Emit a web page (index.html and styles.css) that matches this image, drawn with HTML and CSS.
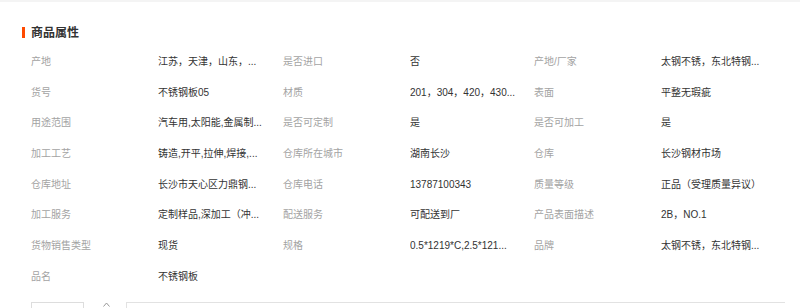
FILE: index.html
```html
<!DOCTYPE html>
<html lang="zh-CN">
<head>
<meta charset="utf-8">
<title>商品属性</title>
<link rel="stylesheet" href="styles.css">
</head>
<body>
<div class="top-band"></div>
<section class="attrs">
  <h2 class="title"><span class="bar"></span>商品属性</h2>
  <div class="grid">
    <div class="label">产地</div><div class="value">江苏，天津，山东，...</div>
    <div class="label">是否进口</div><div class="value">否</div>
    <div class="label">产地/厂家</div><div class="value">太钢不锈，东北特钢...</div>

    <div class="label">货号</div><div class="value">不锈钢板05</div>
    <div class="label">材质</div><div class="value">201，304，420，430...</div>
    <div class="label">表面</div><div class="value">平整无瑕疵</div>

    <div class="label">用途范围</div><div class="value">汽车用,太阳能,金属制...</div>
    <div class="label">是否可定制</div><div class="value">是</div>
    <div class="label">是否可加工</div><div class="value">是</div>

    <div class="label">加工工艺</div><div class="value">铸造,开平,拉伸,焊接,...</div>
    <div class="label">仓库所在城市</div><div class="value">湖南长沙</div>
    <div class="label">仓库</div><div class="value">长沙钢材市场</div>

    <div class="label">仓库地址</div><div class="value">长沙市天心区力鼎钢...</div>
    <div class="label">仓库电话</div><div class="value">13787100343</div>
    <div class="label">质量等级</div><div class="value">正品（受理质量异议）</div>

    <div class="label">加工服务</div><div class="value">定制样品,深加工（冲...</div>
    <div class="label">配送服务</div><div class="value">可配送到厂</div>
    <div class="label">产品表面描述</div><div class="value">2B，NO.1</div>

    <div class="label">货物销售类型</div><div class="value">现货</div>
    <div class="label">规格</div><div class="value">0.5*1219*C,2.5*121...</div>
    <div class="label">品牌</div><div class="value">太钢不锈，东北特钢...</div>

    <div class="label">品名</div><div class="value">不锈钢板</div>
  </div>
  <div class="bottom">
    <div class="box-small"></div>
    <svg class="caret" width="7" height="5" viewBox="0 0 7 5"><polyline points="0.5,4.5 3.5,1 6.5,4.5" fill="none" stroke="#999" stroke-width="1"/></svg>
    <div class="box-wide"></div>
  </div>
</section>
</body>
</html>
```

FILE: styles.css
```css
html, body {
  margin: 0;
  padding: 0;
  background: #ffffff;
  overflow: hidden;
}

body {
  font-family: "Liberation Sans", "Noto Sans CJK SC", sans-serif;
  color: #333333;
}

.top-band {
  height: 2px;
  background: #f4f4f4;
}

.attrs {
  padding: 0 15px 0 31px;
}

.title {
  display: flex;
  align-items: center;
  gap: 6px;
  margin: 23px 0 0 -9px;
  height: 14px;
  font-size: 12px;
  line-height: 14px;
  font-weight: bold;
  color: #333333;
  font-family: "Noto Sans CJK SC", sans-serif;
}

.bar {
  display: block;
  width: 3px;
  height: 11px;
  background: #ff4a00;
  margin-top: 1px;
}

.grid {
  margin-top: 7.67px;
  display: grid;
  grid-template-columns: 127px 125px 127px 124px 127px 124px;
  grid-auto-rows: 30.67px;
  align-items: center;
  font-size: 10px;
  line-height: 14px;
}

.label {
  color: #a3a3a3;
  white-space: nowrap;
}

.value {
  color: #333333;
  white-space: nowrap;
  overflow: hidden;
}

.bottom {
  display: flex;
  align-items: flex-start;
  margin-top: 10px;
}

.box-small {
  width: 51px;
  height: 20px;
  border: 1px solid #dddddd;
  border-bottom: none;
}

.caret {
  display: block;
  margin-left: 19px;
  margin-top: 0;
}

.box-wide {
  flex: 1;
  height: 20px;
  margin-left: 16px;
  border: 1px solid #e2e2e2;
  border-bottom: none;
  border-right: none;
}
```
